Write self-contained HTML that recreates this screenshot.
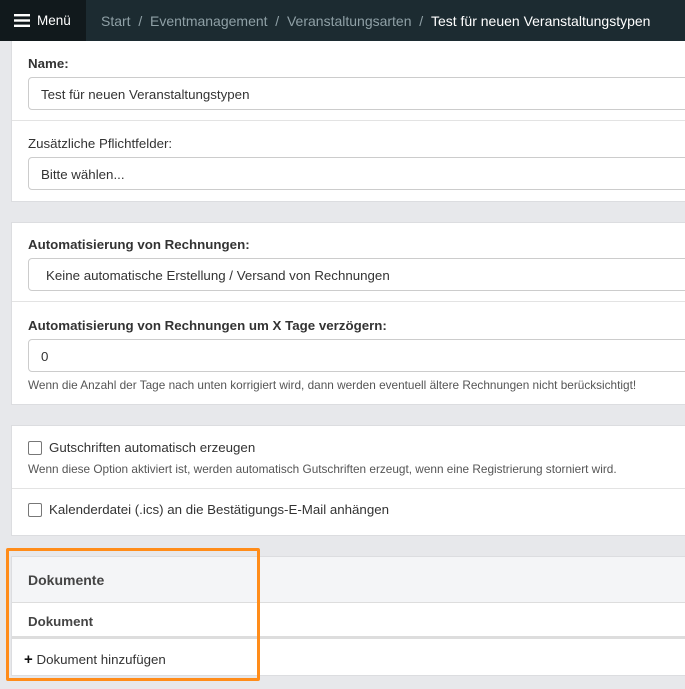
<!DOCTYPE html><html><head><meta charset="utf-8"><style>
body{margin:0;width:685px;height:689px;overflow:hidden;background:#e7e8eb;font-family:"Liberation Sans",sans-serif;color:#333;position:relative}
.top{position:absolute;left:0;top:0;width:685px;height:41px;background:#1c2b31;color:#8fa0a6;font-size:14px}
.menu{position:absolute;left:0;top:0;width:86px;height:41px;background:#11191c;color:#fff}
.card{position:absolute;left:11px;width:690px;background:#fff;border:1px solid #dcdde0;box-sizing:border-box}
.abs{position:absolute}
.lbl{font-size:13.3px;font-weight:bold;color:#333}
.inp{position:absolute;left:16px;width:680px;height:33px;border:1px solid #ccc;border-radius:4px;box-sizing:border-box;font-size:13.3px;padding:9px 12px;color:#333}
.hr{position:absolute;left:0;right:0;border-top:1px solid #e3e3e3}
.help{font-size:11.8px;color:#555}
.cb{position:absolute;width:12px;height:12px;border:1px solid #777;border-radius:2px;background:#fff}
</style></head><body>
<div class="top"><div class="menu"><svg class="abs" style="left:14px;top:14px" width="16" height="13"><rect y="0" width="16" height="2.4" fill="#fff"/><rect y="5.3" width="16" height="2.4" fill="#fff"/><rect y="10.6" width="16" height="2.4" fill="#fff"/></svg><span class="abs" style="left:37px;top:13px;font-size:13.5px">Menü</span></div>
<span class="abs" style="left:101px;top:13px;white-space:nowrap">Start &nbsp;/ &nbsp;Eventmanagement &nbsp;/ &nbsp;Veranstaltungsarten &nbsp;/ &nbsp;<span style="color:#fff">Test für neuen Veranstaltungstypen</span></span></div>

<div class="card" style="top:41px;height:161px;border-top:none">
<div class="abs lbl" style="left:16px;top:15px">Name:</div>
<div class="inp" style="top:36px">Test für neuen Veranstaltungstypen</div>
<div class="hr" style="top:79px"></div>
<div class="abs" style="left:16px;top:95px;font-size:13.3px">Zusätzliche Pflichtfelder:</div>
<div class="inp" style="top:116px">Bitte wählen...</div>
</div>

<div class="card" style="top:222px;height:183px">
<div class="abs lbl" style="left:16px;top:14px">Automatisierung von Rechnungen:</div>
<div class="inp" style="top:35px;padding-left:17px">Keine automatische Erstellung / Versand von Rechnungen</div>
<div class="hr" style="top:78px"></div>
<div class="abs lbl" style="left:16px;top:95px">Automatisierung von Rechnungen um X Tage verzögern:</div>
<div class="inp" style="top:116px">0</div>
<div class="abs help" style="left:16px;top:155px;white-space:nowrap">Wenn die Anzahl der Tage nach unten korrigiert wird, dann werden eventuell ältere Rechnungen nicht berücksichtigt!</div>
</div>

<div class="card" style="top:425px;height:111px">
<div class="cb" style="left:16px;top:15px"></div><div class="abs" style="left:37px;top:14px;font-size:13.3px">Gutschriften automatisch erzeugen</div>
<div class="abs help" style="left:16px;top:36px;white-space:nowrap">Wenn diese Option aktiviert ist, werden automatisch Gutschriften erzeugt, wenn eine Registrierung storniert wird.</div>
<div class="hr" style="top:62px"></div>
<div class="cb" style="left:16px;top:77px"></div><div class="abs" style="left:37px;top:76px;font-size:13.3px">Kalenderdatei (.ics) an die Bestätigungs-E-Mail anhängen</div>
</div>

<div class="card" style="top:556px;height:120px">
<div class="abs" style="left:0;top:0;right:0;height:45px;background:#f4f5f7;border-bottom:1px solid #ddd"></div>
<div class="abs" style="left:16px;top:15px;font-size:14px;font-weight:bold;color:#444">Dokumente</div>
<div class="abs lbl" style="left:16px;top:57px;color:#444">Dokument</div>
<div class="hr" style="top:79px;border-top:3px solid #ddd"></div>
<div class="abs" style="left:12px;top:94px;font-size:13.3px"><b style="font-size:15px;color:#111">+</b> Dokument hinzufügen</div>
</div>
<div class="abs" style="left:6px;top:548px;width:254px;height:133px;border:3px solid #ff8c1a;border-radius:2px;box-sizing:border-box"></div>
</body></html>
